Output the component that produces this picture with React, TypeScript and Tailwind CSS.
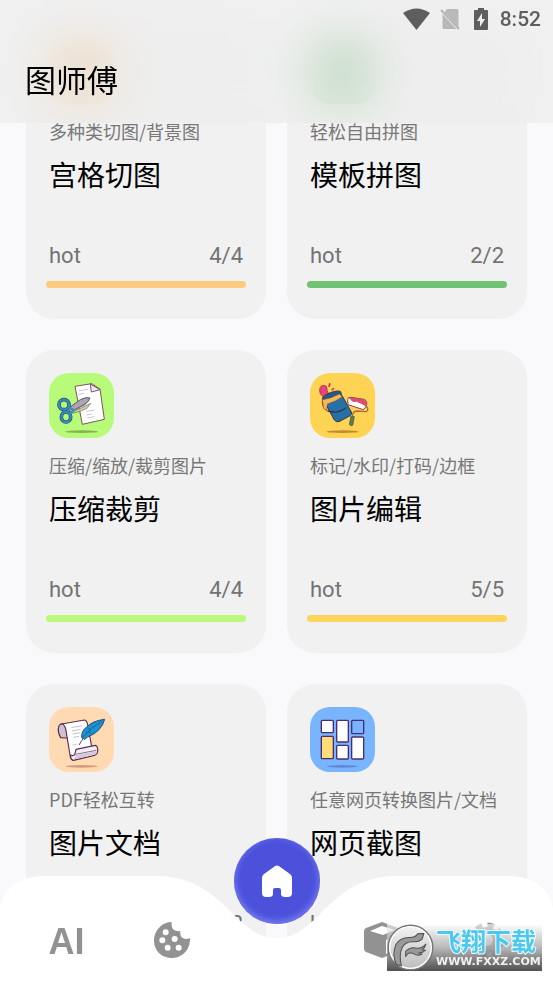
import React from "react";
import clsx from "clsx";

type Tool = {
  title: string;
  subtitle: string;
  count: string;
  tile: string;
  bar: string;
  icon: React.ReactNode;
};

const OUTLINE = "#5b3150";

const GridCutIcon = () => (
  <svg viewBox="0 0 195 195" className="h-full w-full" aria-hidden="true">
    <g fill="none" stroke={OUTLINE} strokeWidth="4">
      <rect x="45" y="40" width="48" height="48" rx="4" />
      <rect x="102" y="40" width="48" height="48" rx="4" />
      <rect x="45" y="97" width="48" height="48" rx="4" />
      <rect x="102" y="97" width="48" height="48" rx="4" />
    </g>
  </svg>
);

const TemplateIcon = () => (
  <svg viewBox="0 0 195 195" className="h-full w-full" aria-hidden="true">
    <g fill="none" stroke={OUTLINE} strokeWidth="4">
      <rect x="42" y="42" width="62" height="100" rx="4" />
      <rect x="112" y="42" width="40" height="45" rx="4" />
      <rect x="112" y="96" width="40" height="46" rx="4" />
    </g>
  </svg>
);

const ScissorsIcon = () => (
  <svg viewBox="27 22 195 195" className="h-full w-full" aria-hidden="true">
    <ellipse cx="125" cy="198" rx="49" ry="4" fill="#82b34f" />
    <path d="M105 62 L155 54 L180 70 L193 161 L127 176 Z" fill="#fff" stroke="#7d5560" strokeWidth="3" strokeLinejoin="round" />
    <path d="M151 55 L154 79 L180 72 Z" fill="#eee6f2" stroke="#7d5560" strokeWidth="3" strokeLinejoin="round" />
    <path d="M116 76l27-5M115 86l18-3M138 137l26-4M139 148l17-3M141 157l22-4" stroke="#c9bbcf" strokeWidth="2.5" fill="none" />
    <path d="M96 138 L122 128 L152 113 L141 128 L125 135 L98 143 Z" fill="#c9d9a0" stroke="#74606b" strokeWidth="2" />
    <path d="M85 128 L121 102 Q138 93 150 97 Q146 110 132 117 L90 140 Z" fill="#aaa6b5" stroke="#635064" strokeWidth="3" strokeLinejoin="round" />
    <path d="M88 125 L105 132 L137 116" fill="none" stroke="#7d7188" strokeWidth="3" />
    <g fill="none" stroke="#34465f" strokeWidth="11">
      <circle cx="72" cy="117" r="15" />
      <ellipse cx="78" cy="154" rx="14" ry="15" />
    </g>
    <g fill="none" stroke="#2f8fbf" strokeWidth="7">
      <circle cx="72" cy="117" r="15" />
      <ellipse cx="78" cy="154" rx="14" ry="15" />
      <path d="M84 124l14 7M89 144l13-10" />
    </g>
  </svg>
);

const PaintIcon = () => (
  <svg viewBox="30 22 195 195" className="h-full w-full" aria-hidden="true">
    <ellipse cx="128" cy="198" rx="48" ry="4" fill="#c48733" />
    <path d="M67 104 L69 92 Q58 86 59 72 Q61 58 73 59 Q83 61 81 74 Q83 83 93 91 Z" fill="#ed427b" stroke="#a03a5e" strokeWidth="3" />
    <path d="M84 63l3-10q3-3 5 1l-2 10zM93 72l7-6q5 1 2 5l-6 4z" fill="#c83c4d" />
    <path d="M68 101 Q62 123 84 137" fill="none" stroke="#7e453d" strokeWidth="3" />
    <path d="M73 108 L124 86 L154 139 Q157 147 149 151 L117 168 Q108 170 103 163 Z" fill="#2670a6" stroke="#32364f" strokeWidth="3" strokeLinejoin="round" />
    <path d="M69 99 Q66 90 94 80 Q117 72 123 79 L123 89 Q105 98 76 112 Z" fill="#245a87" stroke="#4c3548" strokeWidth="3" />
    <path d="M67 102 Q90 100 118 85 L127 93 Q107 108 82 115 L80 134 L71 129 Z" fill="#f7b956" stroke="#82533e" strokeWidth="2" />
    <path d="M84 136 Q112 146 138 126" fill="none" stroke="#273452" strokeWidth="4" />
    <g strokeLinejoin="round" strokeWidth="3">
      <path d="M143 102 Q142 94 153 95 L193 101 Q205 108 198 123 L190 132 L144 117 Z" fill="#fff" stroke="#8c3b4b" />
      <path d="M149 97 L190 102 Q201 106 197 120 L186 114 L170 107 L158 107 Z" fill="#e84a70" stroke="#c05068" />
    </g>
    <path d="M197 120 Q209 130 199 138 L169 136 Q158 138 157 152" fill="none" stroke="#af6742" strokeWidth="4" />
    <path d="M153 151l10 2-5 26q-7 3-10-3z" fill="#508351" stroke="#4e4838" strokeWidth="2" />
  </svg>
);

const ScrollIcon = () => (
  <svg viewBox="27 20 195 195" className="h-full w-full" aria-hidden="true">
    <ellipse cx="125" cy="198" rx="49" ry="4" fill="#d59a7c" />
    <g stroke={OUTLINE} strokeWidth="3.5" strokeLinejoin="round">
      <path d="M77 113 L62 112 Q51 93 57 76 Q61 68 75 70 L84 112 Z" fill="#cfbfd4" />
      <path d="M65 71 L133 59 Q141 60 143 74 L155 139 L108 176 Q95 184 91 170 L78 91 Q75 72 65 71 Z" fill="#fff" />
      <path d="M108 147 L166 135 Q174 137 173 153 Q173 162 163 165 L101 180 Q91 179 92 164 Q101 169 105 160 Z" fill="#f4edf5" />
      <path d="M107 162 L169 150" fill="none" strokeWidth="2" />
    </g>
    <path d="M108 164l63-12q-2 10-10 12l-58 13z" fill="#d8c8dc" />
    <path d="M94 82l32-6M95 92l27-5M98 101l23-4M100 111l17-3M97 135l12-3" fill="none" stroke="#c1aec7" strokeWidth="2.5" />
    <path d="M132 111 Q126 119 117 134" fill="none" stroke="#514566" strokeWidth="3" />
    <path d="M125 112 Q124 91 139 81 Q158 61 194 57 Q190 74 177 88 Q164 101 153 105 Q140 109 135 117 Z" fill="#1e91d2" stroke="#244d77" strokeWidth="3" strokeLinejoin="round" />
    <path d="M130 110 Q151 82 184 64M147 83l2 9M139 95l15 1" fill="none" stroke="#1b5f98" strokeWidth="2.5" />
  </svg>
);

const CollageIcon = () => (
  <svg viewBox="30 20 195 195" className="h-full w-full" aria-hidden="true">
    <ellipse cx="127" cy="198" rx="47" ry="4" fill="#6485d8" />
    <g fill="#fff" stroke="#4c2c70" strokeWidth="4">
      <rect x="64" y="60" width="36" height="37" rx="3" />
      <rect x="110" y="60" width="35" height="65" rx="3" />
      <rect x="155" y="60" width="36" height="40" rx="3" fill="#78b5fe" />
      <rect x="64" y="108" width="36" height="67" rx="3" fill="#ffdc78" />
      <rect x="110" y="135" width="35" height="41" rx="3" />
      <rect x="155" y="110" width="36" height="66" rx="3" />
    </g>
  </svg>
);

const tools: Tool[] = [
  { title: "宫格切图", subtitle: "多种类切图/背景图", count: "4/4", tile: "bg-[#ffcb7f]", bar: "bg-[#ffcb7f]", icon: <GridCutIcon /> },
  { title: "模板拼图", subtitle: "轻松自由拼图", count: "2/2", tile: "bg-[#6dc36f]", bar: "bg-[#6fc372]", icon: <TemplateIcon /> },
  { title: "压缩裁剪", subtitle: "压缩/缩放/裁剪图片", count: "4/4", tile: "bg-[#b8fa79]", bar: "bg-[#bbfa7b]", icon: <ScissorsIcon /> },
  { title: "图片编辑", subtitle: "标记/水印/打码/边框", count: "5/5", tile: "bg-[#ffd454]", bar: "bg-[#fed55b]", icon: <PaintIcon /> },
  { title: "图片文档", subtitle: "PDF轻松互转", count: "2/2", tile: "bg-[#ffdab2]", bar: "bg-[#ffdab2]", icon: <ScrollIcon /> },
  { title: "网页截图", subtitle: "任意网页转换图片/文档", count: "1/1", tile: "bg-[#78b5fe]", bar: "bg-[#78b5fe]", icon: <CollageIcon /> },
];

const ToolCard = ({ tool }: { tool: Tool }) => (
  <a href="#" className="block rounded-[28px] bg-[#f1f1f1] px-5 pt-[23px] pb-[31px]">
    <div className="px-[3px]">
      <div className={clsx("h-[65px] w-[65px] overflow-hidden rounded-[20px]", tool.tile)}>{tool.icon}</div>
      <p className="mt-[14px] text-[18px] leading-[26px] whitespace-nowrap text-[#777]">{tool.subtitle}</p>
      <h2 className="mt-3 text-[28px] leading-9 whitespace-nowrap text-black">{tool.title}</h2>
      <div className="mt-[52px] flex justify-between font-[Roboto,sans-serif] text-[22px] leading-6 text-[#737373]">
        <span>hot</span>
        <span>{tool.count}</span>
      </div>
    </div>
    <div className={clsx("mt-[13px] h-[7px] rounded-full", tool.bar)} />
  </a>
);

const StatusBar = () => (
  <div className="flex h-[38px] items-center justify-end pr-3 text-[#5e5e5e]">
    <svg viewBox="0 0 27 22" className="mr-[10px] h-[22px] w-[27px]" aria-label="WiFi">
      <path d="M0 5 Q13.5 -4 27 5 L13.5 22 Z" fill="currentColor" />
    </svg>
    <svg viewBox="0 0 20 22" className="mr-[14px] h-[22px] w-5" aria-label="无SIM卡">
      <path d="M7 1h10q1.500 0 1.500 1.500V19L4.500 4zM2.500 6l14 15H4q-1.500 0-1.500-1.500z" fill="#b9b9b9" />
      <path d="M1 2l18 19" stroke="#b4b4b4" strokeWidth="2" />
    </svg>
    <svg viewBox="0 0 14 22" className="mr-3 h-[22px] w-[14px]" aria-label="充电中">
      <path d="M4 0h6v2h3q1 0 1 1v18q0 1-1 1H1q-1 0-1-1V3q0-1 1-1h3z" fill="currentColor" />
      <path d="M8 5 3 13h3v6l5-8H8z" fill="#eee" />
    </svg>
    <span className="font-[Roboto,sans-serif] text-[21px] leading-6 font-medium">8:52</span>
  </div>
);

const CookieIcon = () => (
  <svg viewBox="0 0 108 108" className="h-9 w-9" aria-hidden="true">
    <path d="M53 0 Q51 13 57 22 Q64 29 79 27 Q77 45 88 49 Q96 53 108 48 Q109 80 87 97 Q66 113 38 106 Q10 98 2 71 Q-6 37 18 14 Q33 0 53 0 Z" fill="#929292" />
    <g fill="#fff">
      <circle cx="35" cy="31" r="9" />
      <circle cx="25" cy="55" r="9" />
      <circle cx="62" cy="51" r="9" />
      <circle cx="41" cy="77" r="9" />
      <circle cx="74" cy="77" r="9" />
    </g>
  </svg>
);

const CubeIcon = () => (
  <svg viewBox="0 0 36 36" className="h-9 w-9" aria-hidden="true">
    <path d="M18 0 34 6q2 1 2 3v18q0 2-2 3l-16 6-16-6q-2-1-2-3V9q0-2 2-3z" fill="#929292" />
    <path d="M18 4 31 8 19 13 6 9zM22 18l10-4v14l-10 4z" fill="#fff" />
  </svg>
);

const GearIcon = () => (
  <svg viewBox="0 0 36 36" className="h-9 w-9" aria-hidden="true">
    <circle cx="18" cy="18" r="13" fill="#929292" />
    <circle cx="18" cy="18" r="14" fill="none" stroke="#929292" strokeWidth="7" strokeDasharray="6 5" />
    <circle cx="18" cy="18" r="6" fill="#fff" />
  </svg>
);

const NavBar = () => (
  <nav className="fixed inset-x-0 bottom-0 h-[107px]">
    <svg viewBox="0 0 553 107" preserveAspectRatio="none" className="absolute inset-0 h-full w-full" aria-hidden="true">
      <path
        d="M0 107V34C2 12 20 0 45 0H157C195 0 215 20 233 38S262 62 276.500 62S302 56 320 38S358 0 396 0H508C533 0 551 12 553 34V107Z"
        fill="#fff"
      />
    </svg>
    <div className="relative grid grid-cols-5 px-[14px] pt-11">
      <button className="flex h-11 items-center justify-center font-['Liberation_Sans',sans-serif] text-[36px] leading-10 font-bold text-[#929292]">AI</button>
      <button className="flex h-10 items-center justify-center" aria-label="趣味">
        <CookieIcon />
      </button>
      <button className="col-start-4 flex h-10 items-center justify-center" aria-label="素材">
        <CubeIcon />
      </button>
      <button className="flex h-10 items-center justify-center" aria-label="设置">
        <GearIcon />
      </button>
    </div>
    <button
      className="absolute -top-[38px] left-1/2 flex h-[86px] w-[86px] -translate-x-1/2 items-center justify-center rounded-full bg-[#4b51db] shadow-[inset_0_-2px_6px_1px_#787df0]"
      aria-label="首页"
    >
      <svg viewBox="0 0 30 32" className="h-8 w-[30px]" aria-hidden="true">
        <path d="M12.500 1.500Q15-.5 17.500 1.500L28 9Q30 10.500 30 13V28Q30 32 26 32H23Q19 32 19 29V25Q19 23 17 23H13Q11 23 11 25V29Q11 32 7 32H4Q0 32 0 28V13Q0 10.500 2 9Z" fill="#fff" />
      </svg>
    </button>
  </nav>
);

const Watermark = () => (
  <div className="pointer-events-none fixed right-[11px] bottom-3 flex h-[47px] w-[155px] items-center bg-linear-to-b from-white/60 via-[#a8a8a8]/80 to-[#505050]">
    <svg viewBox="22 26 140 140" className="h-[47px] w-[47px] shrink-0" aria-hidden="true">
      <defs>
        <linearGradient id="silver" x1="0" y1="0" x2="0" y2="1">
          <stop offset="0" stopColor="#f4f4f4" />
          <stop offset="1" stopColor="#bdbdbd" />
        </linearGradient>
      </defs>
      <circle cx="92" cy="96" r="66" fill="url(#silver)" stroke="#777" strokeWidth="5" />
      <circle cx="92" cy="96" r="62" fill="none" stroke="#fff" strokeWidth="4" />
      <g fill="#999" stroke="#505050" strokeWidth="3" strokeLinejoin="round">
        <path d="M49 146 Q37 117 48 88 Q60 65 90 66 Q108 66 113 55 L132 54 L127 70 Q116 80 100 79 Q76 78 67 97 Q57 118 65 151 Z" />
        <path d="M77 108 Q91 93 111 98 Q126 99 138 86 Q135 98 126 103 L137 104 Q126 114 116 112 L126 116 Q111 123 98 113 Q83 109 78 123 Z" />
      </g>
    </svg>
    <div className="pl-[2px] whitespace-nowrap">
      <div className="text-[25px] leading-7 font-bold text-[#4cc8f0] [-webkit-text-stroke:2px_#effcff] [paint-order:stroke]">飞翔下载</div>
      <div className="font-['DejaVu_Sans',sans-serif] text-[11px] leading-4 font-bold text-[#f0f0f0]">WWW.FXXZ.COM</div>
    </div>
  </div>
);

export default function App() {
  return (
    <div className="h-screen overflow-hidden bg-[#f9f9fc] font-['Noto_Sans_CJK_SC',sans-serif]">
      <header className="fixed inset-x-0 top-0 z-10 h-[123px] bg-[#ececec]/70 backdrop-blur-[24px]">
        <StatusBar />
        <h1 className="px-[25px] pt-[18px] text-[31px] leading-[46px] text-black">图师傅</h1>
      </header>
      <main className="grid grid-cols-2 gap-x-[21px] gap-y-[31px] px-[26px] pt-4">
        {tools.map((tool) => (
          <ToolCard key={tool.title} tool={tool} />
        ))}
      </main>
      <NavBar />
      <Watermark />
    </div>
  );
}
